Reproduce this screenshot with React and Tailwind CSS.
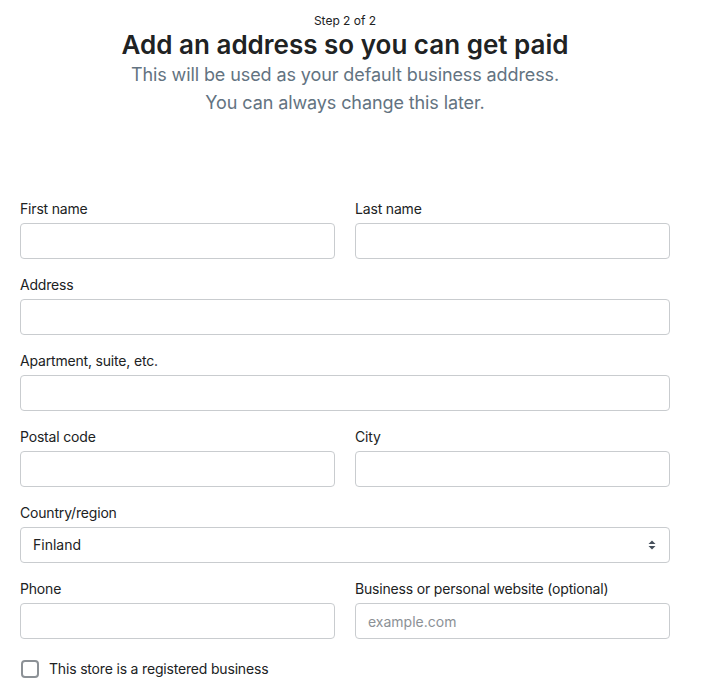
export default function App() {
  const field = (label, opts = {}) => (
    <div className="flex flex-col">
      <label className="mb-1 text-sm leading-5 tracking-[-0.18px] text-[#202223]">{label}</label>
      <input
        type="text"
        placeholder={opts.placeholder}
        className="h-9 rounded border border-[#c9cccf] bg-white px-3 text-sm text-[#202223] placeholder:text-[#8c9196] outline-none"
      />
    </div>
  );

  return (
    <div
      className="w-[690px] bg-white px-5 pt-[13px] pb-4 text-[#202223]"
      style={{ fontFamily: "Inter, 'Noto Sans', sans-serif" }}
    >
      <div className="text-center">
        <p className="text-xs leading-4 text-[#202223]">Step 2 of 2</p>
        <h1 className="text-[26px] leading-8 font-semibold">
          Add an address so you can get paid
        </h1>
        <p className="text-lg leading-7 tracking-[-0.1px] text-[#637381]">
          This will be used as your default business address.
          <br />
          You can always change this later.
        </p>
      </div>

      <form className="mt-[82px] flex flex-col gap-4">
        <div className="grid grid-cols-2 gap-5">
          {field("First name")}
          {field("Last name")}
        </div>
        {field("Address")}
        {field("Apartment, suite, etc.")}
        <div className="grid grid-cols-2 gap-5">
          {field("Postal code")}
          {field("City")}
        </div>
        <div className="flex flex-col">
          <label className="mb-1 text-sm leading-5 tracking-[-0.18px]">Country/region</label>
          <div className="relative">
            <select className="h-9 w-full appearance-none rounded border border-[#c9cccf] bg-white px-3 text-sm text-[#202223] outline-none">
              <option>Finland</option>
            </select>
            <svg
              className="pointer-events-none absolute top-1/2 right-[14px] -translate-y-1/2"
              width="8"
              height="10"
              viewBox="0 0 8 10"
            >
              <path d="M4 0.5 L7.5 4 L0.5 4 Z" fill="#454f5b" />
              <path d="M4 9.5 L7.5 6 L0.5 6 Z" fill="#454f5b" />
            </svg>
          </div>
        </div>
        <div className="grid grid-cols-2 gap-5">
          {field("Phone")}
          {field("Business or personal website (optional)", { placeholder: "example.com" })}
        </div>
        <label className="mt-1 flex items-center gap-[10px] text-sm leading-5 tracking-[-0.18px]">
          <span className="ml-px h-[18px] w-[18px] rounded border-2 border-[#8c9196] bg-white" />
          This store is a registered business
        </label>
      </form>
    </div>
  );
}
